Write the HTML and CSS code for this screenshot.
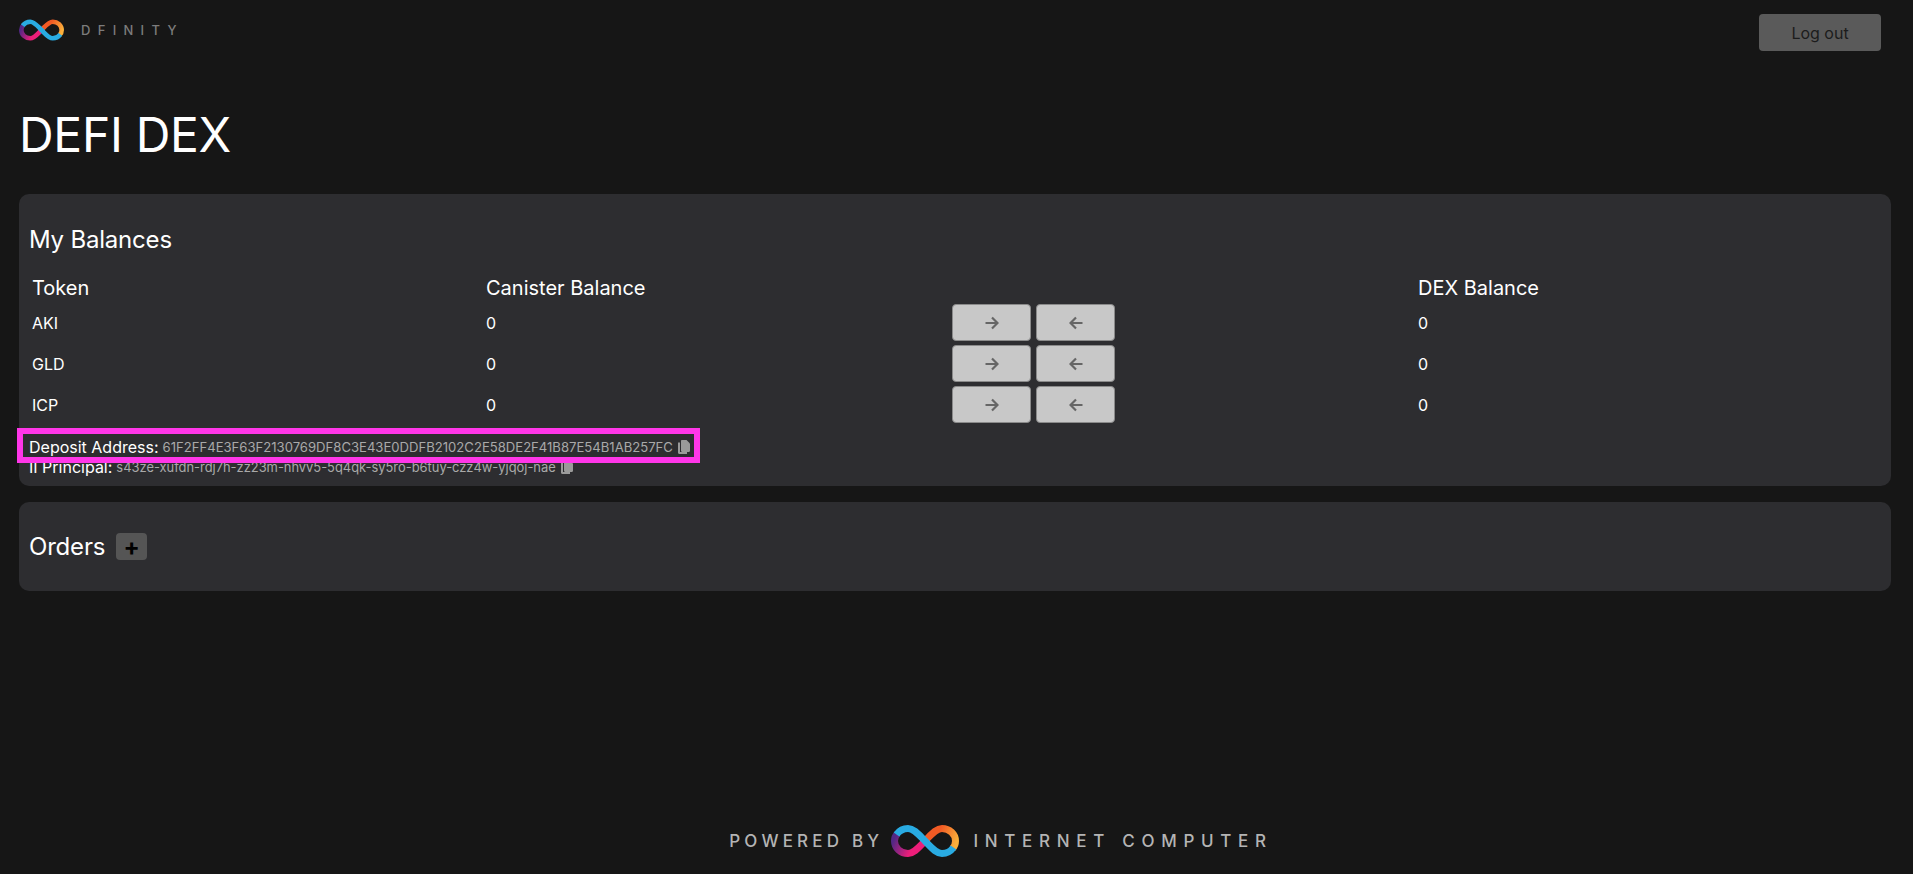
FILE: index.html
```html
<!DOCTYPE html>
<html lang="en">
<head>
    <meta charset="UTF-8">
    <meta name="viewport" content="width=device-width, initial-scale=1.0">
    <title>DEFI DEX</title>
    <link rel="stylesheet" href="styles.css">
</head>
<body>
    <svg class="defs" width="0" height="0" aria-hidden="true">
        <defs>
            <linearGradient id="grad-left" gradientUnits="userSpaceOnUse" x1="30" y1="24" x2="4" y2="12">
                <stop offset="0.3" stop-color="#ed1e79"/>
                <stop offset="1" stop-color="#522785"/>
            </linearGradient>
            <linearGradient id="grad-right" gradientUnits="userSpaceOnUse" x1="38" y1="8" x2="64" y2="20">
                <stop offset="0.3" stop-color="#f15a24"/>
                <stop offset="1" stop-color="#fbb03b"/>
            </linearGradient>
            <symbol id="ic-logo" viewBox="0 0 68 32">
                <g fill="none" stroke-width="7">
                    <path stroke="url(#grad-left)" d="M34 16C28 22 23 28.500 17 28.500C9.500 28.500 3.500 23 3.500 16C3.500 13 4.500 10.500 6.500 8.500"/>
                    <path stroke="url(#grad-right)" d="M34 16C40 10 45 3.500 51 3.500C58.500 3.500 64.500 9 64.500 16C64.500 19 63.500 21.500 61.500 23.500"/>
                    <path stroke="#29abe2" d="M5.500 9.500C8.500 5.500 12.500 3.500 17 3.500C23 3.500 28 10 34 16C40 22 45 28.500 51 28.500C55.500 28.500 59.500 26.500 62.500 22.500"/>
                </g>
            </symbol>
            <symbol id="ic-copy" viewBox="0 0 14 16">
                <path fill="currentColor" d="M1 3.500h2V13h7v2H2.200C1.500 15 1 14.500 1 13.800z"/>
                <path fill="currentColor" d="M4 1.800C4 1.300 4.500 1 5 1h4.500L13 4.500v7.300c0 .5-.5 1.200-1 1.200H5c-.5 0-1-.7-1-1.200z"/>
            </symbol>
            <symbol id="ic-right" viewBox="0 0 14 14">
                <path fill="none" stroke="currentColor" stroke-width="2.200" d="M0.500 7H12.500M7 1.500L12.500 7L7 12.500"/>
            </symbol>
            <symbol id="ic-left" viewBox="0 0 14 14">
                <path fill="none" stroke="currentColor" stroke-width="2.200" d="M13.500 7H1.500M7 1.500L1.500 7L7 12.500"/>
            </symbol>
        </defs>
    </svg>

    <header class="topbar">
        <div class="brand">
            <svg class="brand-logo"><use href="#ic-logo"/></svg>
            <span class="brand-name">DFINITY</span>
        </div>
        <button class="btn-logout" type="button">Log out</button>
    </header>

    <h1 class="page-title">DEFI DEX</h1>

    <section class="card balances">
        <h2>My Balances</h2>
        <table class="balance-table">
            <thead>
                <tr>
                    <th class="col-token">Token</th>
                    <th class="col-balance">Canister Balance</th>
                    <th class="col-actions"></th>
                    <th>DEX Balance</th>
                </tr>
            </thead>
            <tbody>
                <tr>
                    <td>AKI</td>
                    <td>0</td>
                    <td>
                        <div class="actions">
                            <button class="btn-move" type="button"><svg class="ic-arrow"><use href="#ic-right"/></svg></button>
                            <button class="btn-move" type="button"><svg class="ic-arrow"><use href="#ic-left"/></svg></button>
                        </div>
                    </td>
                    <td>0</td>
                </tr>
                <tr>
                    <td>GLD</td>
                    <td>0</td>
                    <td>
                        <div class="actions">
                            <button class="btn-move" type="button"><svg class="ic-arrow"><use href="#ic-right"/></svg></button>
                            <button class="btn-move" type="button"><svg class="ic-arrow"><use href="#ic-left"/></svg></button>
                        </div>
                    </td>
                    <td>0</td>
                </tr>
                <tr>
                    <td>ICP</td>
                    <td>0</td>
                    <td>
                        <div class="actions">
                            <button class="btn-move" type="button"><svg class="ic-arrow"><use href="#ic-right"/></svg></button>
                            <button class="btn-move" type="button"><svg class="ic-arrow"><use href="#ic-left"/></svg></button>
                        </div>
                    </td>
                    <td>0</td>
                </tr>
            </tbody>
        </table>
        <div class="address-row highlight">
            <span class="address-label">Deposit Address:</span>
            <span class="address-value">61F2FF4E3F63F2130769DF8C3E43E0DDFB2102C2E58DE2F41B87E54B1AB257FC</span>
            <svg class="ic-copy"><use href="#ic-copy"/></svg>
        </div>
        <div class="address-row">
            <span class="address-label">II Principal:</span>
            <span class="address-value principal">s43ze-xufdn-rdj7h-zz23m-nhvv5-5q4qk-sy5ro-b6tuy-czz4w-yjqoj-nae</span>
            <svg class="ic-copy"><use href="#ic-copy"/></svg>
        </div>
    </section>

    <section class="card orders">
        <h2>Orders</h2>
        <button class="btn-add" type="button">+</button>
    </section>

    <footer class="powered">
        <span class="powered-by">POWERED BY</span>
        <svg class="powered-logo"><use href="#ic-logo"/></svg>
        <span class="powered-name">INTERNET COMPUTER</span>
    </footer>
</body>
</html>
```

FILE: styles.css
```css
:root {
    --bg-color: #161616;
    --card-color: #2d2d30;
    --muted-color: #a9a9a9;
    --highlight-color: #ff36e8;
}

* {
    box-sizing: border-box;
    margin: 0;
    padding: 0;
    font-family: Inter, 'Liberation Sans', sans-serif;
}

html, body {
    height: 100%;
}

body {
    display: flex;
    flex-direction: column;
    background-color: var(--bg-color);
    color: #ffffff;
    padding: 0 22px 0 19px;
    overflow: hidden;
}

.defs {
    position: absolute;
}

.topbar {
    display: flex;
    justify-content: space-between;
    align-items: flex-start;
    height: 97px;
    padding: 14px 10px 0 0;
}

.brand {
    display: flex;
    align-items: center;
    gap: 17px;
    padding-top: 5px;
}

.brand-logo {
    width: 45px;
    height: 22px;
}

.brand-name {
    font-size: 13px;
    font-weight: 500;
    letter-spacing: 7.300px;
    color: #7c7c7c;
}

.btn-logout {
    width: 122px;
    height: 37px;
    border: none;
    border-radius: 4px;
    background-color: #5a5a5a;
    color: #1c1c1c;
    font-size: 16px;
}

.page-title {
    font-size: 48px;
    font-weight: 400;
    line-height: 76px;
    letter-spacing: -0.300px;
    margin-bottom: 21px;
}

.card {
    background-color: var(--card-color);
    border-radius: 10px;
    padding: 0 10px;
}

h2 {
    font-size: 24px;
    font-weight: 400;
    line-height: 30px;
    letter-spacing: -0.200px;
}

.balances {
    height: 292px;
    padding-top: 31px;
    margin-bottom: 16px;
}

.balance-table {
    width: 100%;
    table-layout: fixed;
    border-collapse: collapse;
    margin-top: 19px;
    font-size: 16px;
}

.col-token {
    width: 454px;
}

.col-balance,
.col-actions {
    width: 466px;
}

th {
    height: 28px;
    padding: 0 3px;
    font-size: 20px;
    font-weight: 400;
    text-align: left;
}

td {
    height: 41px;
    padding: 0 3px;
}

.actions {
    display: flex;
    gap: 5px;
}

.btn-move {
    display: flex;
    justify-content: center;
    align-items: center;
    width: 79px;
    height: 37px;
    border: 1px solid #8a8a8a;
    border-radius: 4px;
    background-color: #c8c8c8;
    color: #666666;
}

.ic-arrow {
    width: 14px;
    height: 14px;
}

.address-row {
    display: flex;
    align-items: center;
    gap: 4px;
    height: 20px;
    font-size: 16px;
    white-space: nowrap;
}

.highlight {
    width: 671px;
    height: 23px;
    margin: 9px 0 0 -6px;
    padding: 3px 0 0 6px;
    outline: 6px solid var(--highlight-color);
}

.address-value {
    font-size: 13.100px;
    color: var(--muted-color);
}

.principal {
    font-size: 12.900px;
}

.ic-copy {
    width: 14px;
    height: 16px;
    color: #9a9a9a;
}

.orders {
    display: flex;
    align-items: center;
    gap: 11px;
    height: 89px;
}

.btn-add {
    width: 31px;
    height: 27px;
    border: none;
    border-radius: 4px;
    background-color: #555555;
    color: #000000;
    font-size: 24px;
    font-weight: 700;
    line-height: 27px;
}

.powered {
    display: flex;
    justify-content: center;
    align-items: center;
    gap: 8px;
    height: 32px;
    margin-top: auto;
    margin-bottom: 17px;
    padding-left: 92px;
    color: #b4b4b4;
    font-weight: 500;
}

.powered-by {
    font-size: 17px;
    letter-spacing: 4.200px;
}

.powered-logo {
    width: 68px;
    height: 32px;
}

.powered-name {
    font-size: 17px;
    letter-spacing: 6.700px;
    margin-left: 6px;
}
```
